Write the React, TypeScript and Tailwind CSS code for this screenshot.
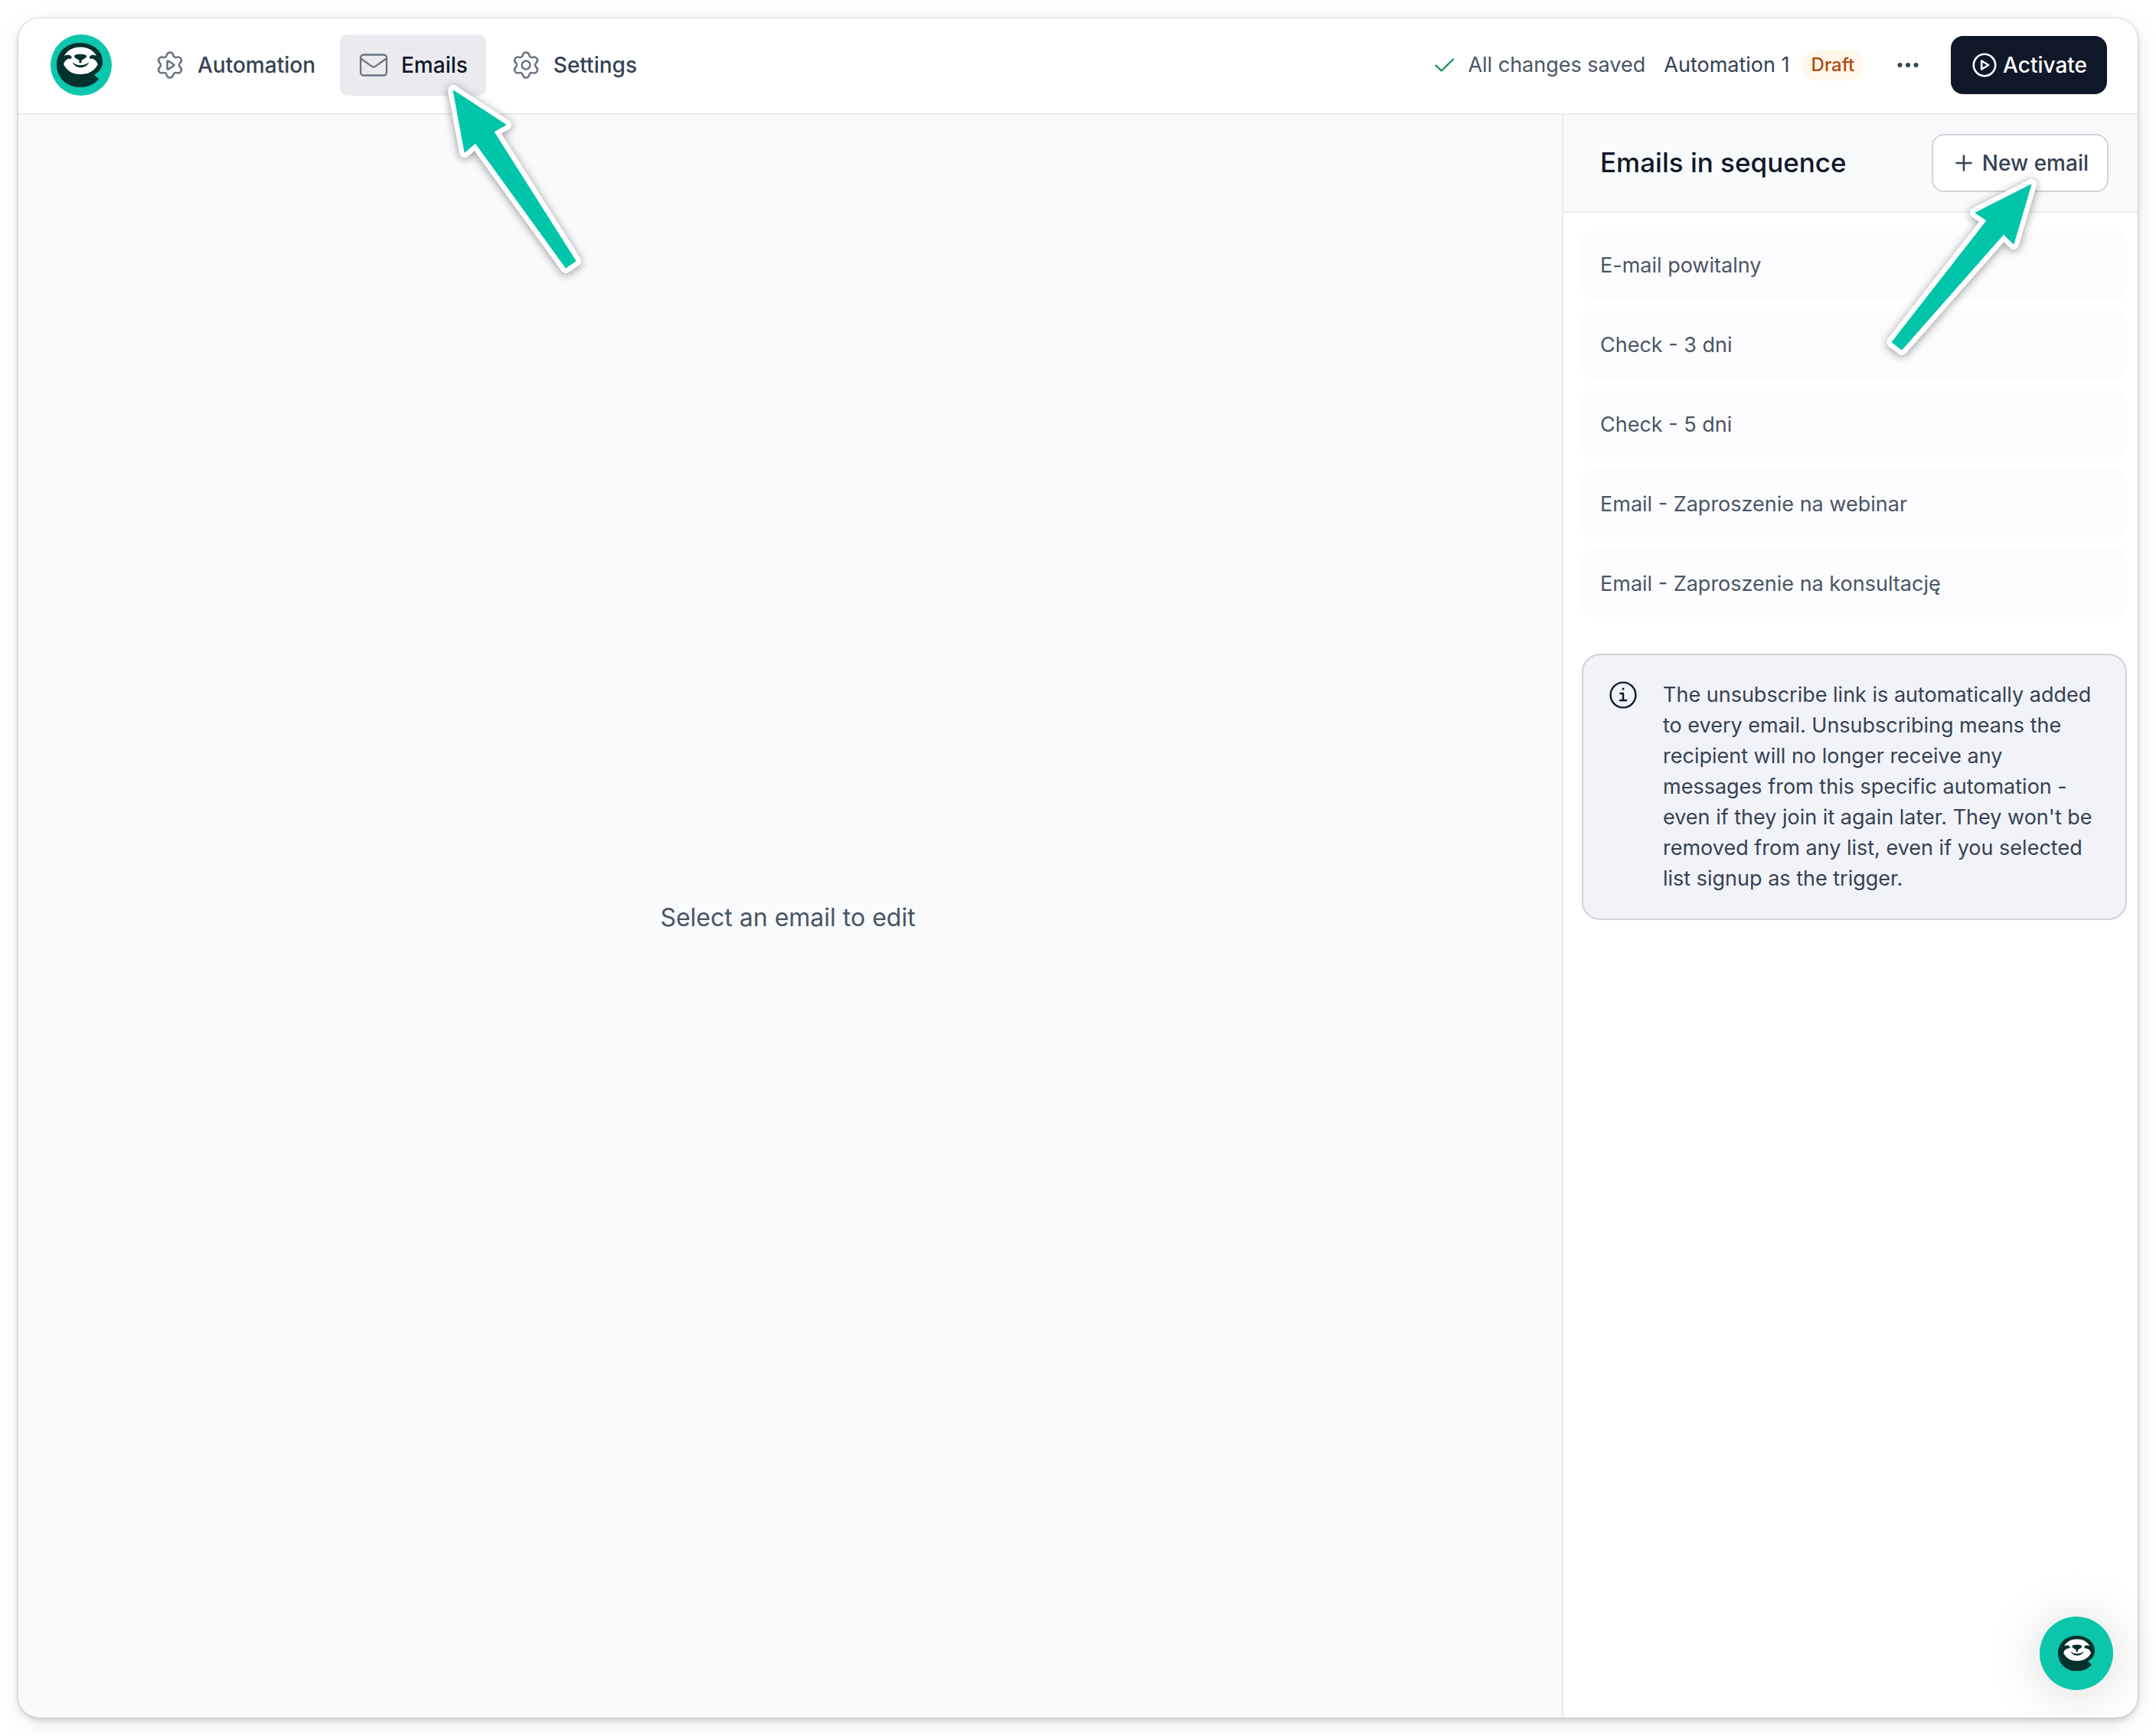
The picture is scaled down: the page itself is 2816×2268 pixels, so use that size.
import React from "react";

const TEAL = "#00c5a9";

type IconProps = { className?: string };

/** Outline of a six-toothed cog made of tangent convex and concave arcs. */
function cogPath(center: number) {
  const tooth = 12.2;
  const toothRadius = 4.3;
  const valley = 15.6;
  const valleyRadius = 3.6;
  const at = (r: number, deg: number) => {
    const a = ((deg - 90) * Math.PI) / 180;
    return [center + r * Math.cos(a), center + r * Math.sin(a)];
  };
  const t = toothRadius / (toothRadius + valleyRadius);
  const mix = (p: number[], q: number[]) =>
    `${(p[0] + (q[0] - p[0]) * t).toFixed(2)} ${(p[1] + (q[1] - p[1]) * t).toFixed(2)}`;
  let d = "";
  for (let i = 0; i < 6; i++) {
    const c = at(tooth, i * 60);
    const before = mix(c, at(valley, i * 60 - 30));
    const after = mix(c, at(valley, i * 60 + 30));
    d += i === 0 ? `M${before}` : `A${valleyRadius} ${valleyRadius} 0 0 0 ${before}`;
    d += `A${toothRadius} ${toothRadius} 0 0 1 ${after}`;
  }
  return `${d}A${valleyRadius} ${valleyRadius} 0 0 0 ${mix(at(tooth, 0), at(valley, -30))}Z`;
}

const COG = cogPath(20);

function CogIcon({ className, children }: IconProps & { children: React.ReactNode }) {
  return (
    <svg viewBox="0 0 40 40" fill="none" stroke="currentColor" strokeWidth="2.5" strokeLinecap="round" strokeLinejoin="round" className={className} aria-hidden="true">
      <path d={COG} />
      {children}
    </svg>
  );
}

function AutomationIcon({ className }: IconProps) {
  return (
    <CogIcon className={className}>
      <path d="M16.5 15.6v8.900c0 .9.8 1.300 1.500.9l7-4.500c.6-.4.6-1.200 0-1.600l-7-4.600c-.7-.4-1.500 0-1.500.9Z" />
    </CogIcon>
  );
}

function SettingsIcon({ className }: IconProps) {
  return (
    <CogIcon className={className}>
      <circle cx="20" cy="20" r="5.4" />
    </CogIcon>
  );
}

function MailIcon({ className }: IconProps) {
  return (
    <svg viewBox="0 0 40 40" fill="none" stroke="currentColor" strokeWidth="2.3" strokeLinecap="round" strokeLinejoin="round" className={className} aria-hidden="true">
      <rect x="3" y="6.5" width="34" height="27" rx="4" />
      <path d="m4 12 13.6 9.6a4 4 0 0 0 4.8 0L36 12" />
    </svg>
  );
}

function CheckIcon({ className }: IconProps) {
  return (
    <svg viewBox="0 0 28 28" fill="none" stroke="currentColor" strokeWidth="2.4" strokeLinecap="round" strokeLinejoin="round" className={className} aria-hidden="true">
      <path d="m2.500 14.500 7.200 7L25 6.500" />
    </svg>
  );
}

function DotsIcon({ className }: IconProps) {
  return (
    <svg viewBox="0 0 32 32" fill="currentColor" className={className} aria-hidden="true">
      <circle cx="5.5" cy="16" r="3" />
      <circle cx="16" cy="16" r="3" />
      <circle cx="26.5" cy="16" r="3" />
    </svg>
  );
}

function PlayCircleIcon({ className }: IconProps) {
  return (
    <svg viewBox="0 0 32 32" fill="none" stroke="currentColor" strokeWidth="2.6" strokeLinecap="round" strokeLinejoin="round" className={className} aria-hidden="true">
      <circle cx="16" cy="16" r="14.2" />
      <path d="M12.2 10.5v11l9-5.5Z" />
    </svg>
  );
}

function PlusIcon({ className }: IconProps) {
  return (
    <svg viewBox="0 0 24 24" fill="none" stroke="currentColor" strokeWidth="2.6" strokeLinecap="round" className={className} aria-hidden="true">
      <path d="M12 2.500v19M2.500 12h19" />
    </svg>
  );
}

function InfoIcon({ className }: IconProps) {
  return (
    <svg viewBox="0 0 36 36" fill="none" stroke="currentColor" strokeWidth="2.4" strokeLinecap="round" strokeLinejoin="round" className={className} aria-hidden="true">
      <circle cx="18" cy="18" r="16.4" />
      <path d="M14.500 16H18v9M14 25h8" />
      <circle cx="18" cy="10" r="1.500" fill="currentColor" stroke="none" />
    </svg>
  );
}

/** Sloth mascot: head with speech tail, mask, eyes, nose and smile. */
function Sloth({ className }: IconProps) {
  return (
    <svg viewBox="0 0 60 58" className={className} aria-hidden="true">
      <path
        d="M30 0C13 0 0 12 0 28.5 0 46 13.500 58 31 58c9 0 17-3 24-10.500l-6-6C56 38 60 32 60 24.500 60 10 47 0 30 0Z"
        fill="#03312d"
      />
      <path
        d="M10 17C14 9.500 21.500 5.500 31 5.500S48 9.500 52 17c-4-1.800-6.800-1.600-8.500.5-1.500 1.900-.4 3.200 1.800 3.200 4 0 6.700 2.600 8.500 7.300C50 36.500 41.500 41 31 41S13 36.500 9 28c1.500-4.700 4.300-7.300 8-7.300 2.500 0 3.500-1.300 2-3.200-1.700-2.100-5-2.300-9-.5Z"
        fill="#fff"
      />
      <path d="M23 17.500c0-2 3.500-2.800 8-2.800s8 .8 8 2.800c0 2-3.800 3.900-6.200 4.900l-.4 3.800h-2.800l-.4-3.800C26.800 21.400 23 19.500 23 17.500Z" fill="#03312d" />
      <path d="M20.500 25.300c6.500 5.400 14.500 5.400 22 0-2.800 5-7 7-11.200 7-4.300 0-8.300-2-10.800-7Z" fill="#03312d" />
    </svg>
  );
}

function Arrow({ points, viewBox, className }: { points: string; viewBox: string; className: string }) {
  return (
    <svg viewBox={viewBox} className={className} aria-hidden="true">
      <polygon points={points} fill="#fff" stroke="#fff" strokeWidth="14" strokeLinejoin="round" />
      <polygon points={points} fill={TEAL} stroke={TEAL} strokeWidth="1" strokeLinejoin="round" />
    </svg>
  );
}

const navClass = "flex h-20 items-center gap-4 rounded-[10px] px-6";

const EMAILS = [
  "E-mail powitalny",
  "Check - 3 dni",
  "Check - 5 dni",
  "Email - Zaproszenie na webinar",
  "Email - Zaproszenie na konsultację",
];

export default function App() {
  return (
    <div className="flex min-h-screen flex-col bg-white p-6 font-['Inter','Liberation_Sans',sans-serif] text-[27px] leading-10 text-gray-700">
      <div className="relative flex flex-1 flex-col rounded-[28px] bg-white shadow-[0_0_3px_rgba(0,0,0,0.2),0_4px_8px_rgba(0,0,0,0.14),0_8px_32px_rgba(0,0,0,0.08)]">
        <header className="flex h-[126px] items-center justify-between border-b-2 border-[#e9eaed] pr-10 pb-0.5 pl-[42px]">
          <div className="flex items-center gap-8">
            <a href="#home" aria-label="Home" className="flex size-20 items-center justify-center rounded-full bg-[#0bc6ab] pr-1">
              <Sloth className="w-[60px]" />
            </a>
            <nav className="flex items-center gap-2 text-[28px] font-medium">
              <a href="#automation" className={navClass}>
                <AutomationIcon className="size-10 text-gray-500" />
                Automation
              </a>
              <div className="relative">
                <a href="#emails" aria-current="page" className="flex h-20 items-center gap-4 rounded-[10px] bg-[#ebebef] px-6 text-gray-900">
                  <MailIcon className="size-10 text-gray-500" />
                  Emails
                </a>
                <Arrow
                  viewBox="580 105 190 260"
                  points="592,118 661,163 645,172 752,341 739,350 621,187 607,199"
                  className="pointer-events-none absolute top-[60px] left-[136px] z-10 w-[190px] overflow-visible drop-shadow-[0_2px_6px_rgba(0,0,0,0.4)]"
                />
              </div>
              <a href="#settings" className={navClass}>
                <SettingsIcon className="size-10 text-gray-500" />
                Settings
              </a>
            </nav>
          </div>
          <div className="flex items-center">
            <CheckIcon className="mr-4 size-7 text-[#139556]" />
            <span className="mr-6 text-gray-600">All changes saved</span>
            <span className="mr-4">Automation 1</span>
            <span className="rounded-full bg-[#fff7e8] px-3 text-2xl leading-10 font-medium text-[#ad4a10]">Draft</span>
            <button type="button" aria-label="More options" className="mr-10 ml-[42px] flex">
              <DotsIcon className="size-8 text-gray-700" />
            </button>
            <button type="button" className="flex h-[76px] items-center gap-2 rounded-2xl bg-[#0f1828] pr-[26px] pl-7 text-[28px] font-medium text-white">
              <PlayCircleIcon className="size-8" />
              Activate
            </button>
          </div>
        </header>

        <div className="flex flex-1">
          <main className="flex flex-1 items-center justify-center rounded-bl-[28px] bg-[#f9fafc] pt-1 pr-1.5">
            <p className="text-[32px] text-gray-600">Select an email to edit</p>
          </main>

          <aside className="w-[752px] shrink-0 border-l-2 border-[#e9eaed]">
            <div className="flex h-32 items-center justify-between border-b-2 border-[#e9eaed] bg-[#f9fafc] pr-[38px] pl-12">
              <h2 className="pb-0.5 text-[35px] font-medium text-gray-900">Emails in sequence</h2>
              <div className="relative">
                <button type="button" className="flex h-[76px] items-center gap-3 rounded-2xl border-2 border-[#d1d3d9] bg-white pr-6 pl-7 text-[28px] font-medium">
                  <PlusIcon className="size-6" />
                  New email
                </button>
                <Arrow
                  viewBox="2460 230 210 240"
                  points="2653,241 2580,278 2595,288 2471,447 2484,457 2617,306 2630,319"
                  className="pointer-events-none absolute top-[55px] right-[84px] z-10 w-[210px] overflow-visible drop-shadow-[0_2px_6px_rgba(0,0,0,0.4)]"
                />
              </div>
            </div>
            <div className="pt-6 pr-3.5 pl-6">
              <ul className="flex flex-col gap-4">
                {EMAILS.map((name) => (
                  <li key={name}>
                    <button type="button" className="h-[88px] w-full rounded-xl bg-[#fcfcfe] px-6 pt-0.5 text-left text-gray-600">
                      {name}
                    </button>
                  </li>
                ))}
              </ul>
              <div className="mt-12 flex gap-[34px] rounded-3xl border-2 border-[#cfd2d9] bg-[#f2f3f8] py-8 pr-8 pl-[34px]">
                <InfoIcon className="mt-0.5 size-9 shrink-0 text-gray-900" />
                <p>
                  The unsubscribe link is automatically added to every email. Unsubscribing means the recipient will no
                  longer receive any messages from this specific automation - even if they join it again later. They
                  won't be removed from any list, even if you selected list signup as the trigger.
                </p>
              </div>
            </div>
          </aside>
        </div>

        <button
          type="button"
          aria-label="Open chat"
          className="absolute right-8 bottom-9 flex size-24 items-center justify-center rounded-full bg-[#0bc6ab] shadow-[0_4px_72px_rgba(0,0,0,0.16)]"
        >
          <Sloth className="w-12" />
        </button>
      </div>
    </div>
  );
}
